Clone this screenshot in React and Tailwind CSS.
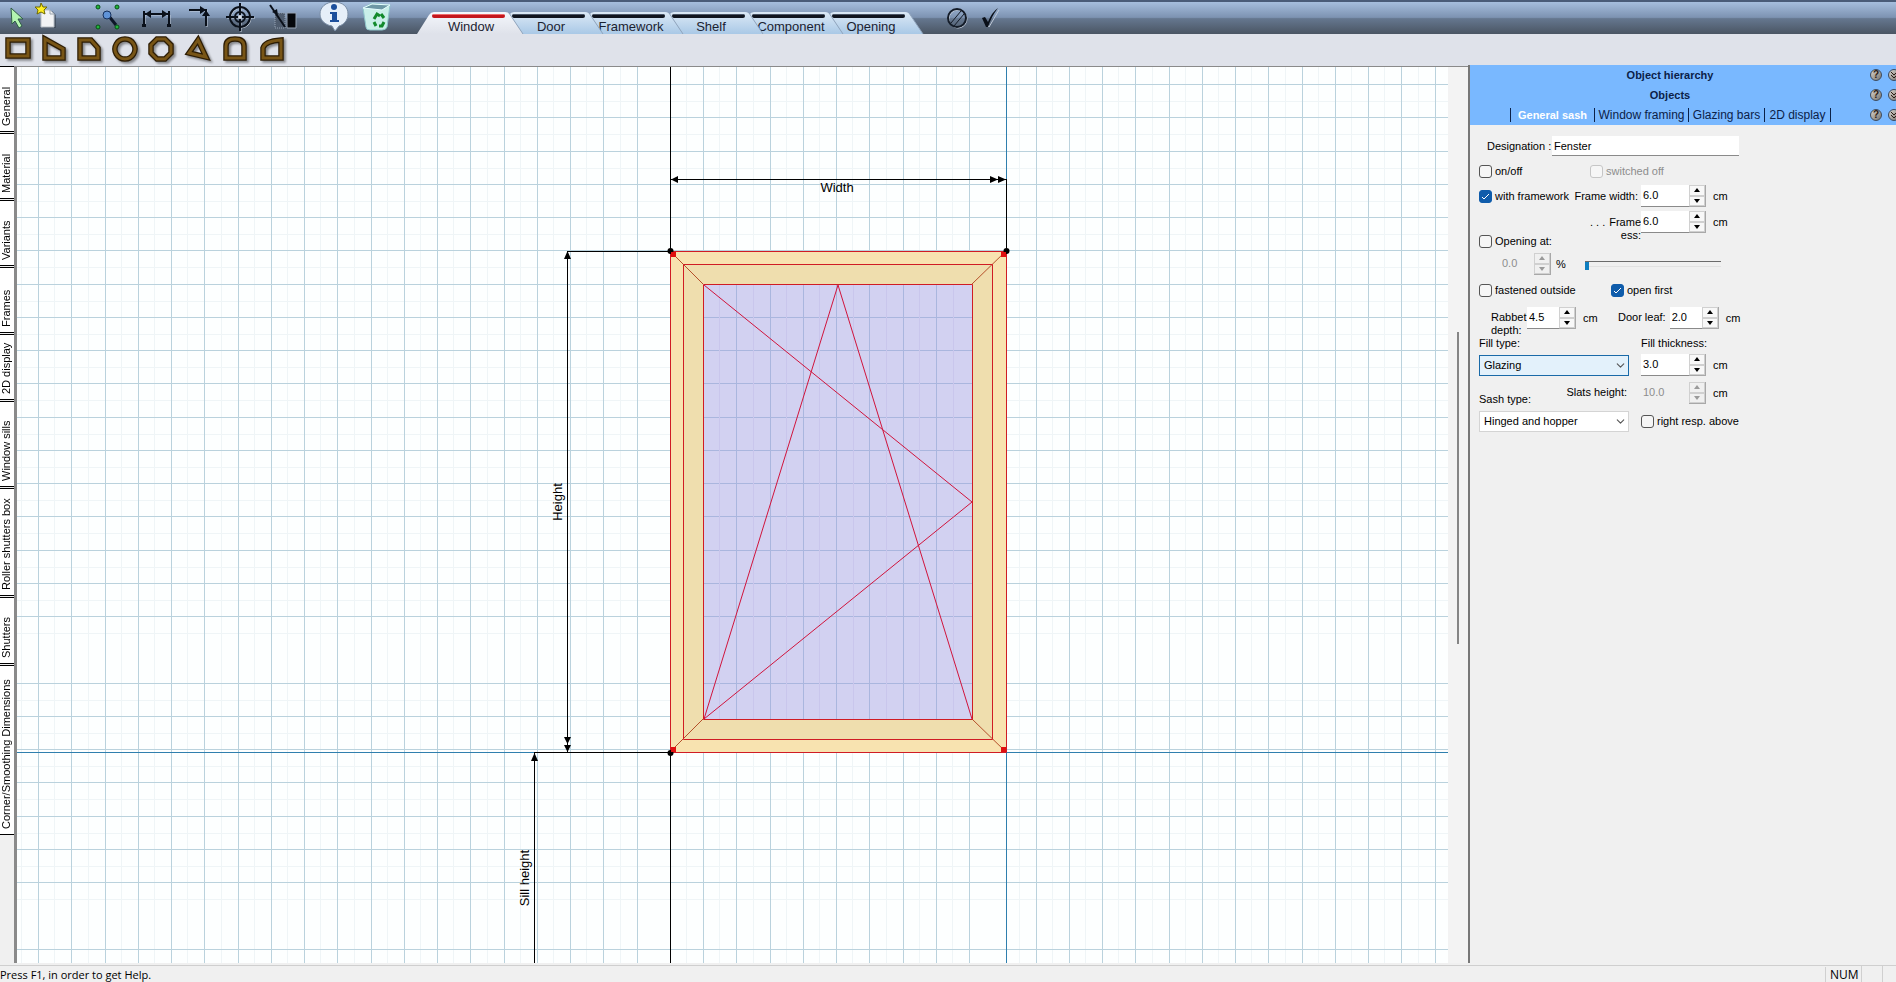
import clsx from 'clsx';
import { ChevronDown } from 'lucide-react';

const OBJECT_TABS = ['Window', 'Door', 'Framework', 'Shelf', 'Component', 'Opening'];

const SIDE_TABS = [
  { label: 'General', size: 'h-[66px]' },
  { label: 'Material', size: 'h-[66px]' },
  { label: 'Variants', size: 'h-[66px]' },
  { label: 'Frames', size: 'h-[66px]' },
  { label: '2D display', size: 'h-[66px]' },
  { label: 'Window sills', size: 'h-[86px]' },
  { label: 'Roller shutters box', size: 'h-[108px]' },
  { label: 'Shutters', size: 'h-[67px]' },
  { label: 'Corner/Smoothing Dimensions', size: 'h-[170px]' },
];

const SHAPES = [
  { name: 'Rectangle', d: 'M3 4H23V20H3Z' },
  { name: 'Slanted', d: 'M4 3L22 13V22H4Z' },
  { name: 'Cut corner', d: 'M3 4H14L21 12V22H3Z' },
  { name: 'Circle', d: 'M12 3A10 10 0 1 1 11.9 3Z' },
  { name: 'Octagon', d: 'M8 3H16L22 9V17L16 23H8L2 17V9Z' },
  { name: 'Triangle', d: 'M13 4L21 21L4 17Z' },
  { name: 'Round arch', d: 'M5 22V10Q5 3 14 3Q23 3 23 10V22Z' },
  { name: 'Half arch', d: 'M6 22V12Q8 5 24 4V22Z' },
];

const COLS = Array.from({ length: 60 }, (_, i) => i).filter((i) => i !== 19 && i !== 29);
const ROWS = Array.from({ length: 40 }, (_, i) => i).filter((i) => i !== 17 && i !== 25);
const STEP = 33.25;

function ToolButton({ label, className, width, children }) {
  return (
    <button aria-label={label} className={clsx('shrink-0', className)}>
      <svg width={width} height="32" viewBox={`0 0 ${width} 32`} fill="none">
        {children}
      </svg>
    </button>
  );
}

function ObjectTab({ label, active, order }) {
  return (
    <button className="relative h-[22px] w-20 shrink-0" style={{ zIndex: 10 - order }}>
      <svg className="absolute top-0 -left-[14px]" width="108" height="22" viewBox="0 0 108 22">
        <path
          d="M0 22L12 3Q14 0 17 0H88Q92 0 94 4L106 22Z"
          fill={active ? 'url(#tabOn)' : 'url(#tabOff)'}
        />
        <path d="M92 1L106 22" stroke="#8fa3bb" fill="none" />
        <rect x="15" y="2" width="73" height="4" rx="2" fill={active ? '#c4161c' : '#10151f'} />
        <path d="M16 2.500H87" stroke={active ? '#ee6a6a' : '#4b5565'} />
      </svg>
      <span
        className={clsx(
          'relative block text-center text-[13px] leading-[14px] text-[#1b2230]',
          active ? 'pt-2' : 'pt-[7px]'
        )}
      >
        {label}
      </span>
    </button>
  );
}

function TopBar() {
  return (
    <header className="flex h-[34px] shrink-0 items-start overflow-hidden border-t-2 border-[#4a5c78] bg-[linear-gradient(#a6bedd,#7d93b2_48%,#65778f_52%,#4a5563)]">
      <svg className="absolute" width="0" height="0" aria-hidden="true">
        <defs>
          <linearGradient id="tabOn" x2="0" y2="1">
            <stop offset="0" stopColor="#f4f7fc" />
            <stop offset="1" stopColor="#dfe2ea" />
          </linearGradient>
          <linearGradient id="tabOff" x2="0" y2="1">
            <stop offset="0" stopColor="#dce9f6" />
            <stop offset="1" stopColor="#a9c8e6" />
          </linearGradient>
        </defs>
      </svg>
      <ToolButton label="Select" className="ml-[9px]" width={16}>
        <path d="M2 6L14 17L9 17L13 24L10 26L6 19L3 22Z" fill="#b4f5b0" stroke="#2f5c46" />
      </ToolButton>
      <ToolButton label="New" className="ml-[10px]" width={24}>
        <path d="M8 9H17L21 13V26H8Z" fill="#353f4d" opacity=".6" />
        <path d="M6 8H15L19 12V25H6Z" fill="#f2f3f5" stroke="#b9c0c8" />
        <path d="M15 8V12H19" stroke="#9aa3ad" />
        <path d="M6 1L8 5H12L9 8L10 12L6 10L2 12L3 8L0 5H5Z" fill="#ffee22" stroke="#6f6a00" />
      </ToolButton>
      <ToolButton label="Edit nodes" className="ml-[35px]" width={28}>
        <path d="M14 13L22 23" stroke="#0d1627" strokeWidth="3" />
        <circle cx="13" cy="13" r="4" fill="#5f93d8" stroke="#16305c" />
        <g fill="#22b43c" stroke="#075017">
          <circle cx="4" cy="5" r="2" />
          <circle cx="23" cy="5" r="2" />
          <circle cx="4" cy="25" r="2" />
          <circle cx="23" cy="25" r="2" />
        </g>
      </ToolButton>
      <ToolButton label="Dimension" className="ml-[19px]" width={32}>
        <g stroke="#c4cedb" transform="translate(1 1)">
          <path d="M3 23V12H28V23" />
        </g>
        <path d="M3 24V9M28 24V9M3 12H28" stroke="#0a101a" strokeWidth="2" />
        <path d="M4 12L10 8V16ZM27 12L21 8V16ZM1 22H5V25H1ZM26 22H30V25H26Z" fill="#0a101a" />
      </ToolButton>
      <ToolButton label="Align" className="ml-[15px]" width={24}>
        <path d="M2 9H18M19 8V25" stroke="#c4cedb" />
        <path d="M1 8H19M18 8V24" stroke="#0a101a" strokeWidth="2" />
        <path d="M18 8L12 4V12ZM18 8L14 14H22Z" fill="#0a101a" />
      </ToolButton>
      <ToolButton label="Origin" className="ml-[14px]" width={30}>
        <g stroke="#c4cedb" transform="translate(1 1)">
          <circle cx="14" cy="15" r="10" />
          <path d="M14 1V29M0 15H28" />
        </g>
        <g stroke="#0a101a" strokeWidth="2">
          <circle cx="14" cy="15" r="10" />
          <circle cx="14" cy="15" r="5" />
          <path d="M14 1V29M0 15H28" />
        </g>
        <circle cx="14" cy="15" r="2" fill="#d6dfeb" />
      </ToolButton>
      <ToolButton label="Trim" className="ml-[13px]" width={30}>
        <path d="M6 11H16V26H6Z" fill="#4f5c6e" stroke="#97a4b5" strokeDasharray="1 1" />
        <path d="M18 11H27V26H18Z" fill="#05070b" stroke="#97a4b5" />
        <path d="M1 3L16 25" stroke="#0a101a" strokeWidth="2" />
        <path d="M3 10L9 13L8 7Z" fill="#0a101a" />
      </ToolButton>
      <ToolButton label="Info" className="ml-[20px]" width={32}>
        <path
          d="M15 0C24 0 29 5 29 12C29 19 24 23 20 24L16 29L13 24C6 23 1 18 1 12C1 5 7 0 15 0Z"
          fill="#e6eff9"
          stroke="#7b8ea6"
        />
        <circle cx="15" cy="5" r="3" fill="#1c4f9c" />
        <path d="M11 10H18V18H20V20H11V18H13V12H11Z" fill="#1c4f9c" />
      </ToolButton>
      <ToolButton label="Recycle bin" className="ml-[11px]" width={30}>
        <path d="M1 6L10 1L28 3L25 25Q24 28 20 28H8Q4 28 4 25Z" fill="#c9efe9" stroke="#8fc6cb" />
        <path d="M1 6L10 2L28 3L20 8Z" fill="#6d98a5" stroke="#e7ffff" />
        <path
          d="M12 17L15 12L18 14M19 12L22 16M22 20L20 24H17M14 24L12 20"
          stroke="#128a2c"
          strokeWidth="3"
        />
      </ToolButton>
      <nav className="ml-[39px] flex pt-[10px]" aria-label="Object types">
        {OBJECT_TABS.map((tab, i) => (
          <ObjectTab key={tab} label={tab} active={i === 0} order={i} />
        ))}
      </nav>
      <ToolButton label="Cancel" className="ml-[35px]" width={24}>
        <g stroke="#c0cad8" transform="translate(1 1)">
          <circle cx="11" cy="16" r="9" />
        </g>
        <circle cx="11" cy="16" r="9" stroke="#141c28" strokeWidth="2" />
        <path d="M5 21L15 9M8 24L18 12" stroke="#141c28" />
      </ToolButton>
      <ToolButton label="Apply" className="ml-[10px]" width={24}>
        <path d="M3 17L8 24L18 7" stroke="#c0cad8" transform="translate(1 1)" />
        <path d="M2 16L5 15L8 20Q12 10 18 6Q11 15 8 25H6Z" fill="#0a0f18" />
      </ToolButton>
    </header>
  );
}

function ShapeBar() {
  return (
    <div className="flex h-8 shrink-0 gap-[10px] bg-[#dfe2ea] pt-[2px] pl-[5px]">
      {SHAPES.map((shape) => (
        <button key={shape.name} aria-label={shape.name} className="h-7 w-[26px] shrink-0">
          <svg
            className="overflow-visible drop-shadow-[2px_2px_1px_rgba(0,0,0,0.4)]"
            width="26"
            height="28"
            viewBox="0 0 26 28"
            fill="none"
          >
            <path d={shape.d} stroke="#2c1c04" strokeWidth="5.500" />
            <path d={shape.d} stroke="#785516" strokeWidth="3" />
          </svg>
        </button>
      ))}
    </div>
  );
}

function SideTabs() {
  return (
    <nav className="flex w-[14px] shrink-0 flex-col gap-px bg-[#f0f0f0]" aria-label="Settings">
      {SIDE_TABS.map((tab) => (
        <button
          key={tab.label}
          className={clsx(
            'flex w-[14px] shrink-0 rotate-180 items-center justify-start border-t border-b border-black bg-white pt-[5px] pl-px text-[11px] leading-[13px] whitespace-nowrap [writing-mode:vertical-rl]',
            tab.size
          )}
        >
          {tab.label}
        </button>
      ))}
    </nav>
  );
}

function Drawing() {
  return (
    <main className="min-w-0 flex-1 overflow-hidden border-t border-l-3 border-[#8a8a8a] bg-[#fdffff]">
      <svg className="h-full w-full" fill="none" fontFamily="Liberation Sans, sans-serif">
        <g transform="translate(-17 -67)">
          {/* Grid */}
          <g stroke="#eff5f7">
            {COLS.map((i) => (
              <path key={i} d={`M${Math.round(21 + i * STEP) + 0.5} 60V1400`} />
            ))}
            {ROWS.map((i) => (
              <path key={i} d={`M0 ${Math.round(101 + i * STEP) + 0.5}H2600`} />
            ))}
          </g>
          <g stroke="#bad2dd">
            {COLS.map((i) => (
              <path key={i} d={`M${Math.round(38 + i * STEP) + 0.5} 60V1400`} />
            ))}
            {ROWS.map((i) => (
              <path key={i} d={`M0 ${Math.round(84 + i * STEP) + 0.5}H2600`} />
            ))}
          </g>

          {/* Axes */}
          <path d="M0 752.500H2600M1006.500 60V1400" stroke="#2f7fae" />

          {/* Frame and glass */}
          <path d="M670 251H1006V752H670Z" fill="#f8e3b0" />
          <path d="M683 264H992V739H683Z" fill="#efdeae" />
          <path d="M703 284H972V719H703Z" fill="#d2d1f1" />
          <g stroke="#aab6de">
            {[736, 770, 803, 836, 869, 903, 936].map((x) => (
              <path key={x} d={`M${x + 0.5} 284V719`} />
            ))}
            {[317, 350, 383, 417, 450, 483, 516, 550, 583, 616, 683].map((y) => (
              <path key={y} d={`M703 ${y + 0.5}H972`} />
            ))}
          </g>
          <g stroke="#c9c6ec">
            {[719, 753, 786, 819, 853, 886, 919, 953].map((x) => (
              <path key={x} d={`M${x + 0.5} 284V719`} />
            ))}
          </g>
          <path
            d="M670 251L703 284M1006 251L972 284M670 752L703 719M1006 752L972 719"
            stroke="#b5502a"
          />
          <g stroke="#d01c24">
            <path d="M670.500 251.500H1006.500V752.500H670.500Z" />
            <path d="M683.500 264.500H992.500V739.500H683.500Z" />
            <path d="M703.500 284.500H972.500V719.500H703.500Z" />
          </g>
          <path d="M704 719L838 285L972 719M704 285L972 502L704 719" stroke="#d0143c" />

          {/* Dimension lines */}
          <path
            d="M670.500 60V251M1006.500 179V251M670 179.500H1006M567 251.500H670M567.500 251V752M534 752.500H670M534.500 752V1400M670.500 752V1400"
            stroke="#000"
          />
          <g fill="#000">
            <path d="M671 179.500L678 176V183ZM1006 179.500L998 176V183ZM998 179.500L990 176V183Z" />
            <path d="M567.500 251L564 259H571ZM567.500 752L564 745H571ZM567.500 744L564 737H571ZM534.500 753L531 761H538Z" />
            <circle cx="670.500" cy="251" r="3" />
            <circle cx="1006.500" cy="251" r="3" />
            <circle cx="670.500" cy="753" r="3" />
          </g>
          <path
            d="M671 252H676V257H671ZM1001 252H1006V257H1001ZM671 747H676V752H671ZM1001 747H1006V752H1001Z"
            fill="#e01010"
          />
          <g fill="#000" fontSize="13">
            <text x="837" y="192" textAnchor="middle">Width</text>
            <text transform="translate(562 502) rotate(-90)" textAnchor="middle">Height</text>
            <text transform="translate(529 878) rotate(-90)" textAnchor="middle">Sill height</text>
          </g>
        </g>
      </svg>
    </main>
  );
}

function HeaderButtons() {
  return (
    <div className="flex w-[26px] shrink-0 items-center gap-[6px] overflow-hidden">
      {['help', 'fold'].map((action) => (
        <button
          key={action}
          aria-label={action}
          className="h-3 w-3 shrink-0 rounded-full border border-[#3d4a5c] bg-linear-to-br from-[#d8d5cf] to-[#7a746d] text-[10px] leading-[10px] font-bold text-[#2c1c14]"
        >
          {action === 'help' ? (
            '?'
          ) : (
            <svg width="10" height="10" viewBox="0 0 10 10" fill="none" stroke="currentColor">
              <path d="M2 2L5 5L8 2M2 5L5 8L8 5" />
            </svg>
          )}
        </button>
      ))}
    </div>
  );
}

function PanelHeader() {
  return (
    <div className="bg-[#79b8ff] text-[#0b2148]">
      {['Object hierarchy', 'Objects'].map((title) => (
        <div key={title} className="flex h-5">
          <h2 className="flex-1 text-center text-[11px] leading-5 font-bold">{title}</h2>
          <HeaderButtons />
        </div>
      ))}
      <div className="flex h-5">
        <div className="flex flex-1 items-center pl-[40px] text-[12px] leading-[14px] whitespace-nowrap">
          <button className="w-[84px] border-l border-[#0b2148] text-[11px] font-bold text-white">
            General sash
          </button>
          <button className="w-[94px] border-l border-[#0b2148]">Window framing</button>
          <button className="w-[76px] border-l border-[#0b2148]">Glazing bars</button>
          <button className="w-[67px] border-r border-l border-[#0b2148]">2D display</button>
        </div>
        <HeaderButtons />
      </div>
    </div>
  );
}

function Check({ id, label, checked, disabled, className }) {
  return (
    <label
      htmlFor={id}
      className={clsx(
        'flex items-center gap-[3px] whitespace-nowrap',
        disabled && 'text-[#8d8d8d]',
        className
      )}
    >
      <span className="grid shrink-0">
        <input
          id={id}
          type="checkbox"
          defaultChecked={checked}
          disabled={disabled}
          className="peer col-start-1 row-start-1 h-[13px] w-[13px] appearance-none rounded-[3px] border border-[#555] bg-[#f6f6f6] checked:border-[#0f5cab] checked:bg-[#0f5cab] disabled:border-[#c6c6c6]"
        />
        <svg
          className="pointer-events-none invisible col-start-1 row-start-1 peer-checked:visible"
          width="13"
          height="13"
          viewBox="0 0 13 13"
          fill="none"
        >
          <path d="M3 7L5 9L10 4" stroke="#fff" />
        </svg>
      </span>
      {label}
    </label>
  );
}

function Spinner({ id, label, value, size, unit = 'cm', disabled }) {
  return (
    <div className="flex h-[22px] shrink-0 items-center">
      <input
        id={id}
        aria-label={label}
        defaultValue={value}
        disabled={disabled}
        className={clsx(
          'h-[22px] border-b border-[#8a8a8a] bg-white pb-[2px] pl-[2px] disabled:border-transparent disabled:bg-transparent disabled:text-[#8d8d8d]',
          size
        )}
      />
      <div className="flex h-[22px] w-[17px] flex-col border-r border-b border-[#a8a8a8]">
        {['M0 4L3 0L6 4Z', 'M0 0L3 4L6 0Z'].map((d, i) => (
          <button
            key={d}
            type="button"
            disabled={disabled}
            aria-label={`${label} ${i ? 'down' : 'up'}`}
            className="flex flex-1 items-center justify-center border border-[#d0d0d0] bg-[#f8f8f8] text-black disabled:bg-[#f0f0f0] disabled:text-[#9a9a9a]"
          >
            <svg width="6" height="4" viewBox="0 0 6 4" fill="currentColor">
              <path d={d} />
            </svg>
          </button>
        ))}
      </div>
      <span className={unit === '%' ? 'ml-[5px]' : 'ml-[7px]'}>{unit}</span>
    </div>
  );
}

function Dropdown({ id, options, className }) {
  return (
    <div className="grid w-[150px] items-center">
      <select
        id={id}
        className={clsx('col-start-1 row-start-1 h-[21px] appearance-none border pl-1', className)}
      >
        {options.map((option) => (
          <option key={option}>{option}</option>
        ))}
      </select>
      <ChevronDown
        size={13}
        strokeWidth={2}
        className="pointer-events-none col-start-1 row-start-1 mr-[2px] justify-self-end text-[#555]"
      />
    </div>
  );
}

function PropertiesPanel() {
  return (
    <aside className="-mt-px w-[428px] shrink-0 overflow-hidden border-l-2 border-[#777] bg-[#f0f0f0]">
      <PanelHeader />
      <form className="pt-[11px] pl-[9px] text-[11px] leading-[13px]">
        <div className="flex h-5 items-center">
          <label htmlFor="designation" className="w-[73px] pl-2 whitespace-nowrap">
            Designation :
          </label>
          <input
            id="designation"
            defaultValue="Fenster"
            className="h-5 w-[187px] border-b border-[#8a8a8a] bg-white pl-[2px]"
          />
        </div>

        <div className="mt-[5px] flex h-5 items-center">
          <Check id="onoff" label="on/off" className="w-[111px]" />
          <Check id="switchedoff" label="switched off" disabled />
        </div>

        <div className="mt-1 flex h-[22px] items-center">
          <Check id="framework" label="with framework" checked className="w-[92px]" />
          <label htmlFor="framewidth" className="w-[70px] pr-[3px] text-right whitespace-nowrap">
            Frame width:
          </label>
          <Spinner id="framewidth" label="Frame width" value="6.0" size="w-12" />
        </div>

        <div className="mt-1 flex h-10 items-start">
          <Check id="opening" label="Opening at:" className="mr-[27px] mb-[3px] w-[84px] self-end" />
          <label htmlFor="framethick" className="flex w-[51px] justify-between pt-[5px]">
            <span>. . .</span>
            <span className="text-right">
              Frame
              <br />
              ess:
            </span>
          </label>
          <Spinner id="framethick" label="Frame thickness" value="6.0" size="w-12" />
        </div>

        <div className="mt-[2px] flex h-[22px] items-center pl-[21px]">
          <Spinner id="percent" label="Opening" value="0.0" size="w-[34px]" unit="%" disabled />
          <input
            type="range"
            aria-label="Opening"
            defaultValue="0"
            className="ml-[19px] h-3 w-[136px] appearance-none bg-transparent [&::-webkit-slider-runnable-track]:h-[6px] [&::-webkit-slider-runnable-track]:border-t [&::-webkit-slider-runnable-track]:border-b [&::-webkit-slider-runnable-track]:border-t-[#6b6b6b] [&::-webkit-slider-runnable-track]:border-b-[#e2e2e2] [&::-webkit-slider-thumb]:h-2 [&::-webkit-slider-thumb]:w-1 [&::-webkit-slider-thumb]:appearance-none [&::-webkit-slider-thumb]:bg-[#0f7fc0]"
          />
        </div>

        <div className="mt-[5px] flex h-5 items-center">
          <Check id="fastened" label="fastened outside" className="w-[132px]" />
          <Check id="openfirst" label="open first" checked />
        </div>

        <div className="mt-[7px] flex h-[30px] items-start pl-[12px]">
          <label htmlFor="rabbet" className="w-[36px] pt-1">
            Rabbet depth:
          </label>
          <Spinner id="rabbet" label="Rabbet depth" value="4.5" size="w-8" />
          <label htmlFor="doorleaf" className="w-[72px] pt-1 pr-[4px] text-right">
            Door leaf:
          </label>
          <Spinner id="doorleaf" label="Door leaf" value="2.0" size="w-8" />
        </div>

        <div className="flex h-[13px]">
          <label htmlFor="filltype" className="w-[162px]">
            Fill type:
          </label>
          <label htmlFor="fillthick">Fill thickness:</label>
        </div>
        <div className="mt-1 flex h-[22px] items-end gap-3">
          <Dropdown id="filltype" options={['Glazing']} className="border-[#1a6aa8] bg-[#e3f1fb]" />
          <Spinner id="fillthick" label="Fill thickness" value="3.0" size="w-12" />
        </div>

        <div className="mt-[6px] flex h-6 items-start">
          <label htmlFor="sashtype" className="w-[84px] self-end">
            Sash type:
          </label>
          <label htmlFor="slats" className="w-[78px] pt-1 pr-[14px] text-right whitespace-nowrap">
            Slats height:
          </label>
          <Spinner id="slats" label="Slats height" value="10.0" size="w-12" disabled />
        </div>
        <div className="mt-[5px] flex h-5 items-center gap-3">
          <Dropdown id="sashtype" options={['Hinged and hopper']} className="border-[#d4d4d4] bg-white" />
          <Check id="rightabove" label="right resp. above" />
        </div>
      </form>
    </aside>
  );
}

export default function App() {
  return (
    <div className="flex h-screen flex-col overflow-hidden bg-[#f0f0f0] font-['Liberation_Sans',Arial,sans-serif] text-black">
      <TopBar />
      <ShapeBar />
      <div className="flex min-h-0 flex-1">
        <SideTabs />
        <Drawing />
        {/* Scroll strip between drawing and properties */}
        <div className="flex w-5 shrink-0 justify-center border-t border-[#8a8a8a] bg-[#f3f3f3] pt-[265px]">
          <div className="h-[312px] w-[2px] bg-[#858585]" />
        </div>
        <PropertiesPanel />
      </div>
      <footer className="mt-[2px] flex h-[17px] shrink-0 items-end border-t border-[#cfcfcf] font-['Open_Sans',sans-serif] text-[11px] leading-[15px]">
        <span className="flex-1">Press F1, in order to get Help.</span>
        <span className="w-9 border-l border-[#d0d0d0] pl-1 text-[12px]">NUM</span>
        <span className="h-4 w-[21px] border-l border-[#d0d0d0]" />
        <span className="h-4 w-[14px] border-l border-[#d0d0d0]" />
      </footer>
    </div>
  );
}
